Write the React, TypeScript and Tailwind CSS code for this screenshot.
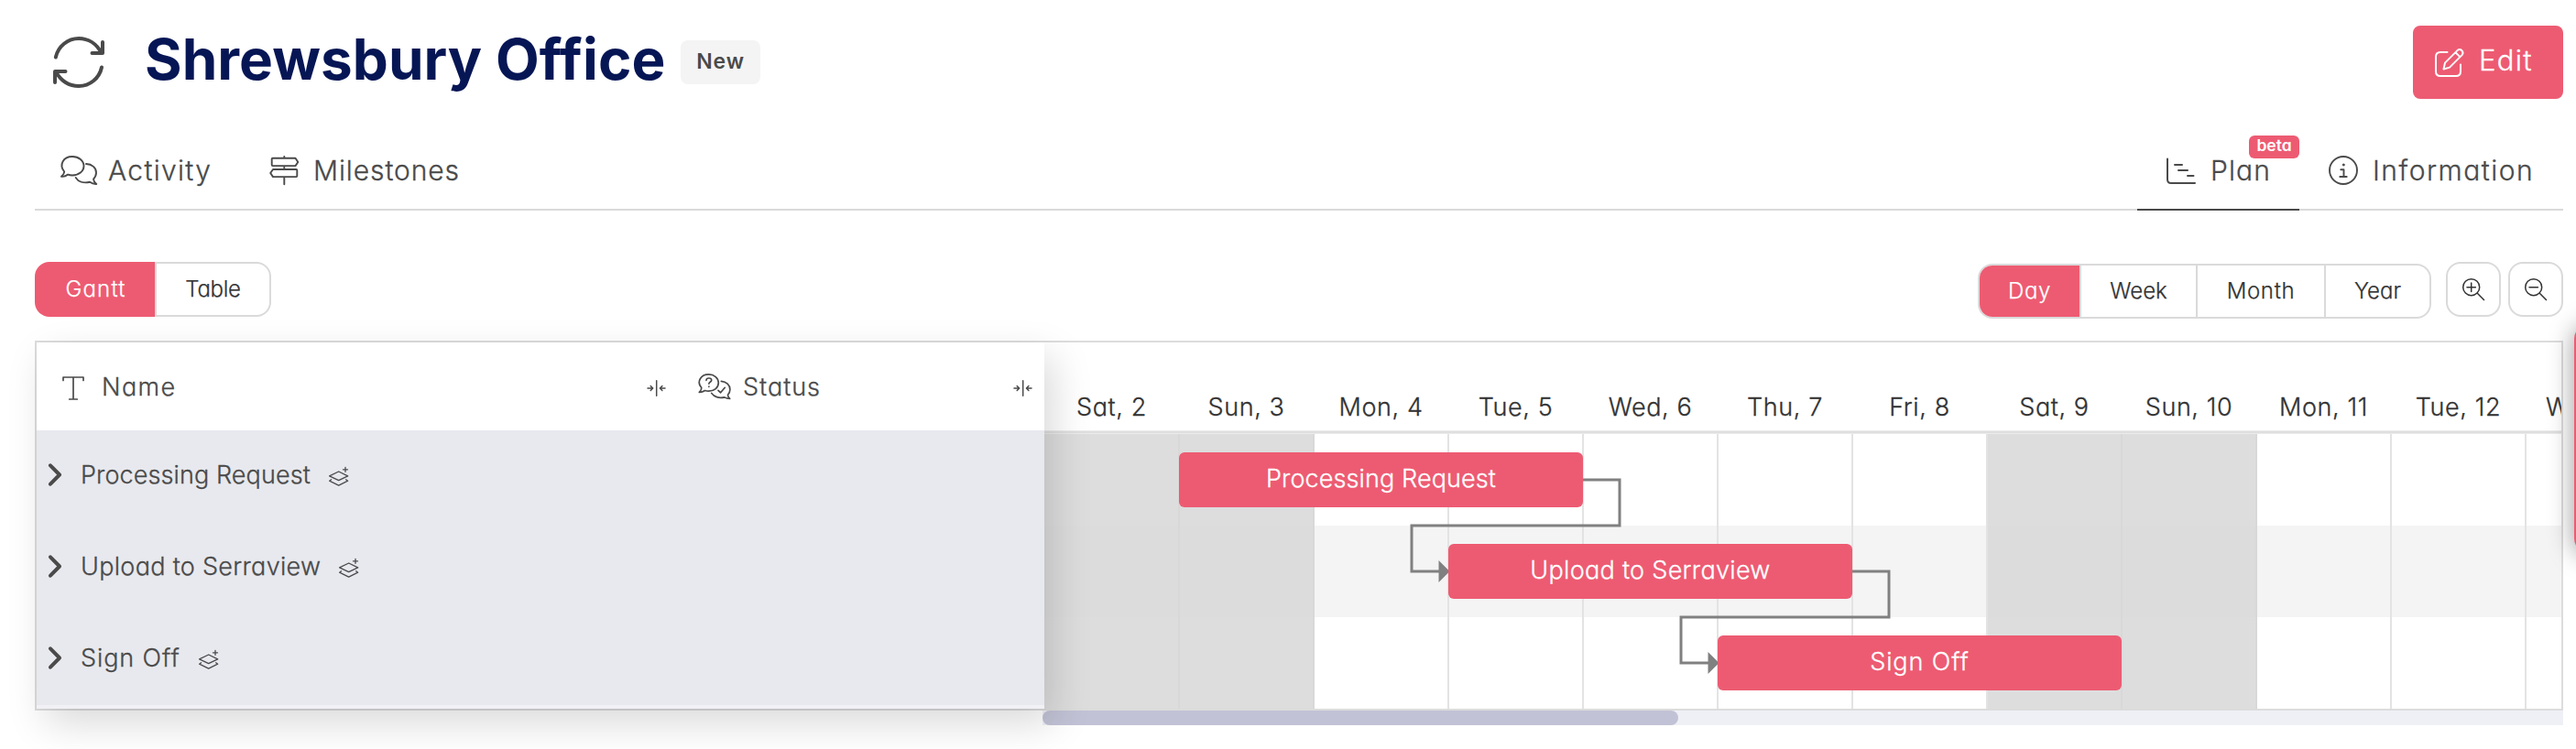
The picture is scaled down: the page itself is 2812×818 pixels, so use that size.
import type { ReactNode } from "react";

function Svg({ w, h, sw = 2, className = "", children }: { w: number; h: number; sw?: number; className?: string; children: ReactNode }) {
  return (
    <svg width={w} height={h} viewBox={`0 0 ${w} ${h}`} fill="none" stroke="currentColor" strokeWidth={sw} strokeLinecap="round" strokeLinejoin="round" className={`shrink-0 overflow-visible ${className}`}>
      {children}
    </svg>
  );
}

const RefreshIcon = () => (
  <Svg w={58} h={56} sw={4}>
    <path d="M2.8 22.5C5.5 10.5 16 2 28 2c10.500 0 19.500 6 24.500 15.500" />
    <path d="M54 6v12H42.500" />
    <path d="M53 33.500C50.500 45.500 40 54 28 54c-10.500 0-19.500-6-25-15.500" />
    <path d="M2 50V38h11.500" />
  </Svg>
);

const ChatIcon = () => (
  <Svg w={41} h={32} sw={1.9}>
    <path d="M4.200 17.500C-2 10 3 1 13 1c7 0 12.500 4.500 12.500 10.300S20 21.500 13 21.500c-2 0-3.500-.3-4.800-.9C6.500 22 3.500 23.200 1 22.800c2-1.800 3.200-3.300 3.200-5.300Z" />
    <path d="M28 9c6.500.2 11 4.200 11 9.600 0 2.900-1.200 5.200-3 7 .2 1.900 1.500 4.200 3.300 5.400-2.800.2-5.300-.8-7.300-2.200-7 1.600-12.800-.6-15.300-4.800" />
  </Svg>
);

const SignpostIcon = () => (
  <Svg w={33} h={32} sw={1.9}>
    <path d="M3.700 2.700H28.500L31.300 7l-2.800 4.100H3.700a1 1 0 0 1-1-1V3.700a1 1 0 0 1 1-1ZM29.300 15H4L1.200 19 4 23.100h25.300a1 1 0 0 0 1-1V16a1 1 0 0 0-1-1ZM16.300.9v1.800M16.300 11.100V15M16.300 23.100V31.200" />
  </Svg>
);

const PlanIcon = () => (
  <Svg w={32} h={29}>
    <path d="M1 1.500V24c0 2.500 1.500 4 4 4H31M9 8h8M13 14h10M23 20h6.500" />
  </Svg>
);

const InfoIcon = () => (
  <Svg w={32} h={32} sw={1.9}>
    <circle cx="16" cy="16" r="15" />
    <path d="M13.300 15.200h3.200V23M12.300 23h7.400" />
    <circle cx="16.200" cy="10" r="1" fill="currentColor" strokeWidth="1" />
  </Svg>
);

const EditIcon = () => (
  <Svg w={32} h={32}>
    <path d="M13.500 5H6C3 5 1 7 1 10v16c0 3 2 5 5 5h17c3 0 5-2 5-5v-7.500" />
    <path d="m11 16.600 14-14a3.700 3.700 0 0 1 5 5l-14 14-6.500 1.900ZM22.500 5.300l4.800 4.800" />
  </Svg>
);

const TextIcon = () => (
  <Svg w={24} h={26} sw={1.7}>
    <path d="M1 4.500V1h22v3.500M12 1v24M7.700 25h8.600" />
  </Svg>
);

const StatusIcon = () => (
  <Svg w={36} h={29} sw={1.7}>
    <path d="M3.800 15.500C-2 9 3 .9 11.700.9c6 0 10.600 4 10.600 9.200 0 5.200-4.600 9.100-10.600 9.100-1.600 0-2.900-.2-4.100-.7-1.600 1.100-4 2-6.300 1.900 1.500-1.300 2.500-3 2.500-4.900Z" />
    <path d="M25.300 8.300c5.500.4 9.600 4.300 9.600 9 0 2.300-.8 4.300-2.400 6 .2 1.700 1 3.100 2.200 4.200-2.300 0-4.300-.6-5.900-1.600-6 1.500-11.500-.6-14.100-4.500M22 18.300l2.600 2.500 4.700-5.500" />
    <path d="M9 7.300c.1-3.100 5.700-3 5.700 0 0 2-2.800 2-2.800 3.800M11.900 14.200v.1" />
  </Svg>
);

const CollapseIcon = () => (
  <Svg w={21} h={18} sw={1.5}>
    <path d="M10.700.8v16.500M1 9h5.500M4.200 6.500 6.700 9l-2.500 2.500M20 9h-5.500M16.900 6.500 14.400 9l2.500 2.500" />
  </Svg>
);

const LayersIcon = () => (
  <Svg w={22} h={21} sw={1.3}>
    <path d="M.6 9.900 10.700 5l10 4.900-10 4.800ZM2.600 13.800.6 15.200l10.100 4.900 10-4.900-2-1.400M18 .3v5M15.500 2.800h5" />
  </Svg>
);

const ChevronIcon = () => (
  <Svg w={14} h={25} sw={4}>
    <path d="m2 2.300 10 10.200L2 22.700" />
  </Svg>
);

const ZoomIcon = ({ plus = false }: { plus?: boolean }) => (
  <Svg w={24} h={24} sw={1.5} className="text-[#333]">
    <circle cx="9.700" cy="9.700" r="9" />
    <path d="m16.300 16.300 7.200 7.200M5 9.700h9.400" />
    {plus && <path d="M9.700 5v9.400" />}
  </Svg>
);

const days: { label: string; off?: boolean }[] = [
  { label: "Sat, 2", off: true },
  { label: "Sun, 3", off: true },
  { label: "Mon, 4" },
  { label: "Tue, 5" },
  { label: "Wed, 6" },
  { label: "Thu, 7" },
  { label: "Fri, 8" },
  { label: "Sat, 9", off: true },
  { label: "Sun, 10", off: true },
  { label: "Mon, 11" },
  { label: "Tue, 12" },
  { label: "Wed, 13" },
];

const tasks = [
  { name: "Processing Request", tracking: "tracking-[0.1px]", pos: "left-[147px] top-5" },
  { name: "Upload to Serraview", tracking: "tracking-[0.300px]", pos: "left-[441px] top-[120px]" },
  { name: "Sign Off", tracking: "tracking-[0.9px]", pos: "left-[735px] top-[220px]" },
];

function Header() {
  return (
    <header className="flex h-20 items-center">
      <div className="flex w-[117px] pl-5">
        <RefreshIcon />
      </div>
      <h1 className="-mt-[6px] w-[585px] pl-[3px] text-[62px] leading-[74px] font-bold tracking-[0.05px] whitespace-nowrap text-[#061655]">Shrewsbury Office</h1>
      <span className="ml-[3px] flex h-12 w-[87px] items-center justify-center rounded-lg bg-[#f4f4f4] pb-0.5 text-[23px] font-semibold tracking-[0.9px]">New</span>
      <button className="ml-auto flex h-20 w-[164px] items-center rounded-lg bg-[#ed5b72] pl-6 text-white">
        <EditIcon />
        <span className="ml-4 pb-[3px] text-[31px] font-light tracking-[1.3px] [-webkit-text-stroke:0.3px]">Edit</span>
      </button>
    </header>
  );
}

function Tabs() {
  return (
    <nav className="mt-8 flex h-[90px] border-b-2 border-[#dadada] text-[30px] font-light [-webkit-text-stroke:0.3px]">
      <a className="flex w-[229px] items-center pt-5 pb-4 pl-7">
        <ChatIcon />
        <span className="ml-[11px] tracking-[1.3px]">Activity</span>
      </a>
      <a className="flex items-center pt-5 pb-4 pl-[27px]">
        <SignpostIcon />
        <span className="ml-[15px] tracking-[0.9px]">Milestones</span>
      </a>
      <a className="relative ml-auto -mb-0.5 flex w-[177px] items-center border-b-2 border-[#4a4a4a] pt-5 pb-4 pl-8">
        <PlanIcon />
        <span className="ml-4 tracking-[1.1px]">Plan</span>
        <span className="absolute top-2 right-0 flex h-[25px] w-[55px] items-center justify-center rounded-[6px] bg-[#ed5b72] pb-0.5 text-[17.5px] font-semibold text-white [-webkit-text-stroke:0px]">beta</span>
      </a>
      <a className="flex w-[288px] items-center pt-5 pb-4 pl-8">
        <InfoIcon />
        <span className="ml-4 tracking-[1.5px]">Information</span>
      </a>
    </nav>
  );
}

function Toolbar() {
  return (
    <div className="mt-14 flex h-[62px] items-start text-[24px] font-light text-[#333] [-webkit-text-stroke:0.25px]">
      <div className="flex h-[60px]">
        <button className="flex w-[131px] items-center justify-center rounded-l-2xl bg-[#ed5b72] pb-px pl-0.5 tracking-[1.2px] text-white">Gantt</button>
        <button className="flex w-[127px] items-center justify-center rounded-r-2xl border-2 border-[#dadada] pb-px tracking-[-0.3px]">Table</button>
      </div>
      <div className="mt-0.5 ml-auto flex h-[60px] overflow-hidden rounded-2xl border-2 border-[#dadada]">
        <button className="flex w-[109px] items-center justify-center bg-[#ed5b72] pb-px tracking-[0.6px] text-white">Day</button>
        <button className="flex w-[127px] items-center justify-center border-l-2 border-[#dadada] pb-px">Week</button>
        <button className="flex w-[140px] items-center justify-center border-l-2 border-[#dadada] pb-px tracking-[0.7px]">Month</button>
        <button className="flex w-[115px] items-center justify-center border-l-2 border-[#dadada] pb-px">Year</button>
      </div>
      <button className="ml-4 flex size-[60px] items-center justify-center rounded-2xl border-2 border-[#dadada]">
        <ZoomIcon plus />
      </button>
      <button className="ml-2 flex size-[60px] items-center justify-center rounded-2xl border-2 border-[#dadada]">
        <ZoomIcon />
      </button>
    </div>
  );
}

function TaskList() {
  return (
    <section className="relative z-10 flex w-[1100px] flex-col bg-[#f0f0f5] text-[27px] font-light shadow-[10px_16px_40px_rgba(0,0,0,0.15)] [-webkit-text-stroke:0.3px]">
      <div className="flex h-24 items-center bg-white pl-7">
        <div className="flex w-[638px] items-center pt-[3px]">
          <TextIcon />
          <span className="ml-[19px] tracking-[1.4px]">Name</span>
        </div>
        <div className="flex w-14 items-center pt-[3px]">
          <CollapseIcon />
        </div>
        <div className="flex w-[344px] items-center pt-px">
          <StatusIcon />
          <span className="ml-[13px] pt-px tracking-[1px]">Status</span>
        </div>
        <div className="flex items-center pt-[3px]">
          <CollapseIcon />
        </div>
      </div>
      {tasks.map((t) => (
        <div key={t.name} className="flex h-[100px] items-center bg-[#e8e9ee] pb-1 pl-[13px]">
          <ChevronIcon />
          <span className={`ml-[21px] pt-0.5 ${t.tracking}`}>{t.name}</span>
          <span className="ml-5 pt-1">
            <LayersIcon />
          </span>
        </div>
      ))}
    </section>
  );
}

function Timeline() {
  return (
    <section className="min-w-0 flex-1 overflow-hidden [-webkit-text-stroke:0.3px]">
      <div className="flex h-24 items-end pb-[5px] text-[27px] font-light text-[#333]">
        {days.map((d) => (
          <div key={d.label} className="w-[147px] shrink-0 text-center tracking-[0.6px]">{d.label}</div>
        ))}
      </div>
      <div className="h-1 border-y border-[#ebebeb] bg-[#dfdfdf]" />
      <div className="relative">
        {tasks.map((t) => (
          <div key={t.name} className="flex h-[100px] w-[1765px] even:bg-[#f4f4f4]">
            {days.map((d) => (
              <div key={d.label} className={`w-[147px] shrink-0 border-r-2 first:w-[148px] ${d.off ? "border-[#d8d8d8] bg-[#d7d7d7]/85" : "border-[#e3e3e3]"}`} />
            ))}
          </div>
        ))}
        <svg width="1656" height="300" viewBox="0 0 1656 300" fill="none" stroke="#808080" strokeWidth="3" className="absolute top-0 left-0">
          {[0, 1].map((i) => (
            <g key={i} transform={`translate(${i * 294} ${i * 100})`}>
              <path d="M588 50H628V100H401V150H432" />
              <path d="M430.500 138v24l12-12Z" fill="#808080" stroke="none" />
            </g>
          ))}
        </svg>
        {tasks.map((t) => (
          <div key={t.name} className={`absolute flex h-[60px] w-[441px] items-center justify-center rounded-[6px] bg-[#ed5b72] pb-0.5 text-[27px] font-light text-white ${t.pos} ${t.tracking}`}>
            {t.name}
          </div>
        ))}
      </div>
    </section>
  );
}

export default function App() {
  return (
    <div className="relative h-[818px] w-[2812px] overflow-hidden bg-white pt-7 pr-[14px] pl-[38px] font-['Inter',sans-serif] text-[#4a4a4a] [font-feature-settings:'cv11']">
      <Header />
      <Tabs />
      <Toolbar />
      <main className="mt-6 flex h-[404px] border-2 border-[#dcdcdc]">
        <TaskList />
        <Timeline />
      </main>
      <div className="ml-[1100px] h-4 bg-[#eff0f6]">
        <div className="h-4 w-[694px] rounded-lg bg-[#c2c2d6]" />
      </div>
      <div className="absolute top-[354px] left-[2810px] h-[250px] w-20 rounded-2xl bg-[#ed5b72] shadow-[0_2px_28px_rgba(0,0,0,0.4)]" />
    </div>
  );
}
